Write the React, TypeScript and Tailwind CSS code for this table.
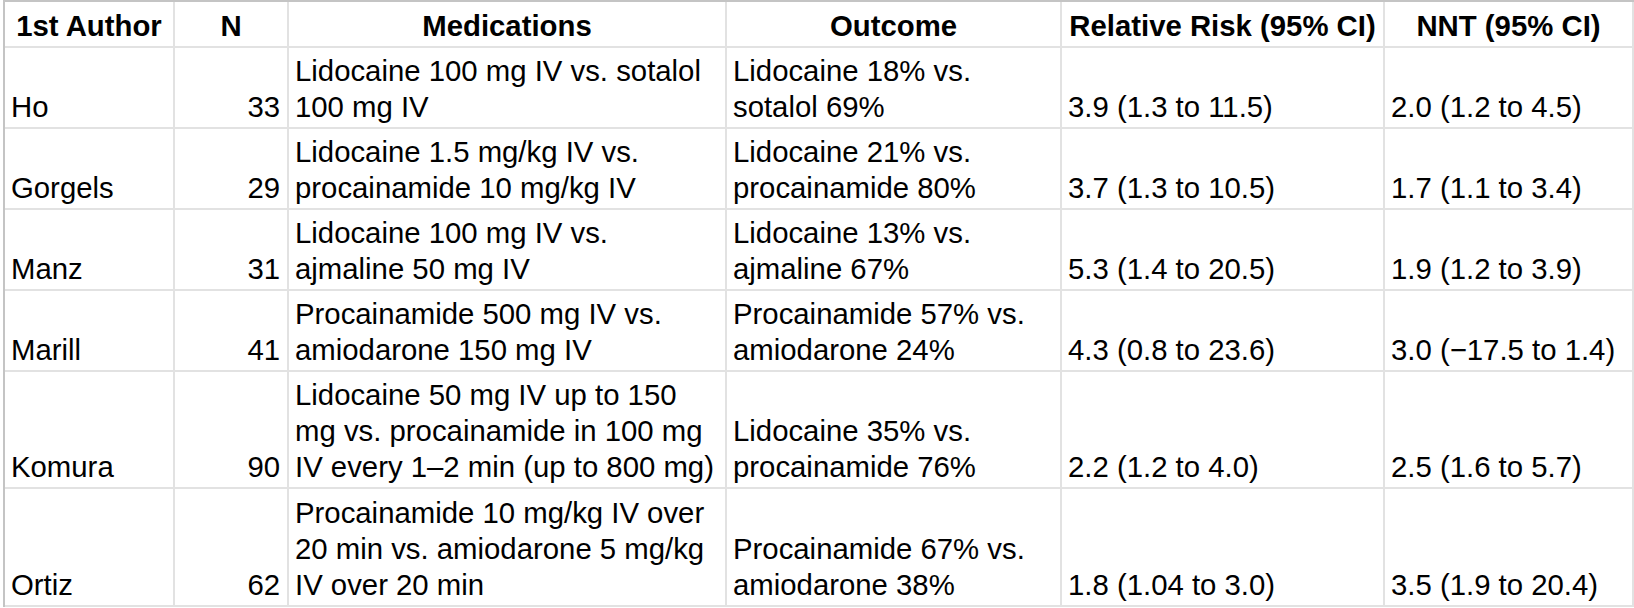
import { FC } from 'react';

type Row = {
  author: string;
  n: string;
  meds: string;
  outcome: string;
  rr: string;
  nnt: string;
  h: string;
};

const rows: Row[] = [
  {
    author: 'Ho',
    n: '33',
    meds: 'Lidocaine 100 mg IV vs. sotalol 100 mg IV',
    outcome: 'Lidocaine 18% vs. sotalol 69%',
    rr: '3.9 (1.3 to 11.5)',
    nnt: '2.0 (1.2 to 4.5)',
    h: 'h-[81px]',
  },
  {
    author: 'Gorgels',
    n: '29',
    meds: 'Lidocaine 1.5 mg/kg IV vs. procainamide 10 mg/kg IV',
    outcome: 'Lidocaine 21% vs. procainamide 80%',
    rr: '3.7 (1.3 to 10.5)',
    nnt: '1.7 (1.1 to 3.4)',
    h: 'h-[81px]',
  },
  {
    author: 'Manz',
    n: '31',
    meds: 'Lidocaine 100 mg IV vs. ajmaline 50 mg IV',
    outcome: 'Lidocaine 13% vs. ajmaline 67%',
    rr: '5.3 (1.4 to 20.5)',
    nnt: '1.9 (1.2 to 3.9)',
    h: 'h-[81px]',
  },
  {
    author: 'Marill',
    n: '41',
    meds: 'Procainamide 500 mg IV vs. amiodarone 150 mg IV',
    outcome: 'Procainamide 57% vs. amiodarone 24%',
    rr: '4.3 (0.8 to 23.6)',
    nnt: '3.0 (\u221217.5 to 1.4)',
    h: 'h-[81px]',
  },
  {
    author: 'Komura',
    n: '90',
    meds: 'Lidocaine 50 mg IV up to 150 mg vs. procainamide in 100 mg IV every 1\u20132 min (up to 800 mg)',
    outcome: 'Lidocaine 35% vs. procainamide 76%',
    rr: '2.2 (1.2 to 4.0)',
    nnt: '2.5 (1.6 to 5.7)',
    h: 'h-[117px]',
  },
  {
    author: 'Ortiz',
    n: '62',
    meds: 'Procainamide 10 mg/kg IV over 20 min vs. amiodarone 5 mg/kg IV over 20 min',
    outcome: 'Procainamide 67% vs. amiodarone 38%',
    rr: '1.8 (1.04 to 3.0)',
    nnt: '3.5 (1.9 to 20.4)',
    h: 'h-[118px]',
  },
];

const headers = ['1st Author', 'N', 'Medications', 'Outcome', 'Relative Risk (95% CI)', 'NNT (95% CI)'];

const cell = 'flex items-end border-r-2 border-b-2 border-[#e2e2e2] px-[6px] pb-[2px]';

const App: FC = () => {
  return (
    <div className="min-h-screen bg-white pl-[3px] text-black" style={{ fontFamily: '"Liberation Sans", Arial, sans-serif' }}>
      <div className="grid w-[1631px] grid-cols-[170px_114px_438px_335px_323px_249px] border-l-2 border-t-2 border-[#c4c4c4] text-[29.33px] leading-[36px]">
        {/* header row */}
        {headers.map((h) => (
          <div key={h} className={`${cell} h-[46px] justify-center font-bold`}>
            {h}
          </div>
        ))}

        {/* data rows */}
        {rows.map((r) => (
          <div key={r.author} className="contents">
            <div className={`${cell} ${r.h}`}>{r.author}</div>
            <div className={`${cell} ${r.h} justify-end pr-[7px]`}>{r.n}</div>
            <div className={`${cell} ${r.h}`}>{r.meds}</div>
            <div className={`${cell} ${r.h}`}>{r.outcome}</div>
            <div className={`${cell} ${r.h}`}>{r.rr}</div>
            <div className={`${cell} ${r.h}`}>{r.nnt}</div>
          </div>
        ))}
      </div>
    </div>
  );
};

export default App;
